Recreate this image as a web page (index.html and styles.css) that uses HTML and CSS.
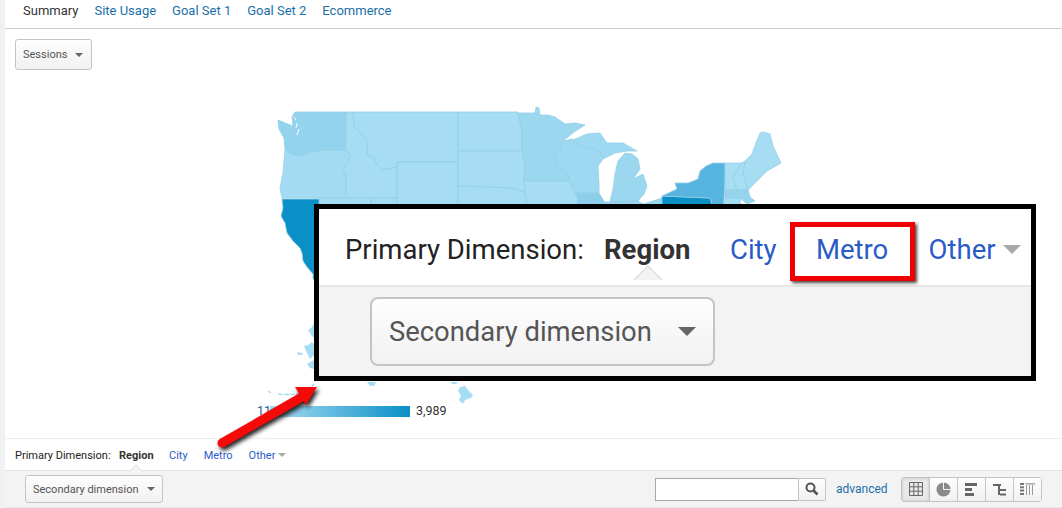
FILE: index.html
```html
<!DOCTYPE html>
<html lang="en">
<head>
    <meta charset="UTF-8" />
    <title>Location report</title>
    <link rel="stylesheet" href="styles.css">
</head>
<body>
<div class="page">
    <nav class="tabs">
        <a class="tab current">Summary</a>
        <a class="tab">Site Usage</a>
        <a class="tab">Goal Set 1</a>
        <a class="tab">Goal Set 2</a>
        <a class="tab">Ecommerce</a>
    </nav>

    <div class="metric-row">
        <button class="select-btn sessions">Sessions<span class="caret"></span></button>
    </div>

    <section class="map-area">
        <svg class="map" viewBox="5 70 1057 333" width="1057" height="333">
            <g class="states">
                <polygon fill="#94d3ee" points="278,119 285,122 293,125 292,116 295,111 346,111 346,149 323,149 310,152 298,155 291,153 285,148 284,137 279,128"/>
                <polygon fill="#a3dbf2" points="285,148 291,153 298,155 310,152 323,149 346,149 351,155 343,170 346,173 346,197 282,197 280,187 283,172 284,160"/>
                <polygon fill="#a6ddf3" points="346,111 353,111 354,125 361,133 368,140 367,154 373,156 378,165 382,169 397,166 397,197 346,197 346,173 343,170 351,155 346,149"/>
                <polygon fill="#a6ddf3" points="353,111 458,111 458,161 397,161 397,166 382,169 378,165 373,156 367,154 368,140 361,133 354,125"/>
                <polygon fill="#a6ddf3" points="397,161 458,161 458,215 397,215"/>
                <polygon fill="#a6ddf3" points="458,111 518,111 522,130 522,150 458,150"/>
                <polygon fill="#a6ddf3" points="458,150 522,150 525,163 524,180 525,192 518,189 510,187 458,185"/>
                <polygon fill="#a6ddf3" points="458,185 510,187 518,189 525,192 528,215 458,215"/>
                <polygon fill="#9cd7f0" points="518,112 535,112 536,106 539,107 540,114 548,114 555,116 565,123 575,122 585,124 574,131 563,140 560,142 561,148 556,153 557,163 569,175 569,180 524,180 525,163 522,150 522,130"/>
                <polygon fill="#9fd9f1" points="563,140 573,138 578,143 600,150 603,158 598,165 599,183 599,192 575,192 570,182 569,175 557,163 556,153 561,148 560,142"/>
                <polygon fill="#a6ddf3" points="524,180 569,180 575,192 578,198 575,215 528,215 525,192"/>
                <polygon fill="#8dcfeb" points="575,192 599,192 605,202 607,215 575,215 578,198"/>
                <polygon fill="#9fd9f1" points="573,139 587,133 600,132 604,138 607,142 623,142 630,146 637,150 627,150 615,152 603,158 600,150 578,143"/>
                <polygon fill="#9cd7f0" points="625,152 632,153 638,158 640,168 633,178 643,173 647,185 644,193 638,200 625,201 610,201 613,188 615,173 618,160"/>
                <polygon fill="#9cd7f0" points="605,201 625,201 625,215 607,215"/>
                <polygon fill="#9cd7f0" points="625,201 638,200 643,203 653,200 662,197 662,215 625,215"/>
                <polygon fill="#0a8fc7" points="662,195 710,197 712,203 712,215 662,215"/>
                <polygon fill="#56b4de" points="675,182 688,182 698,178 700,170 706,165 713,162 725,162 725,180 723,215 712,215 712,203 710,197 662,195 677,188"/>
                <polygon fill="#a8def3" points="725,162 742,162 733,177 737,189 725,189"/>
                <polygon fill="#a8def3" points="742,162 745,160 743,173 748,189 737,189 733,177"/>
                <polygon fill="#a6ddf3" points="745,160 752,153 756,142 760,132 763,131 770,133 773,145 781,162 774,166 767,170 757,180 748,189 743,173"/>
                <polygon fill="#96d4ee" points="725,189 748,189 750,196 755,200 747,203 740,197 725,197"/>
                <polygon fill="#a6ddf3" points="725,197 740,197 742,215 723,215"/>
                <polygon fill="#a6ddf3" points="319,197 371,197 371,215 319,215"/>
                <polygon fill="#a6ddf3" points="371,197 397,197 397,215 371,215"/>
                <polygon fill="#0a8fc7" points="282,198 319,198 319,280 313,278 313,273 307,266 303,260 302,252 300,247 293,240 287,232 285,222 281,215 283,207"/>
            </g>
            <path class="sound" d="M294 116l2 3M297 122l-1 5M299 128l-2 6"/>
            <g class="islands">
                <polygon points="308,329 312,326 315,320 322,330 318,335 315,338 311,334"/>
                <polygon points="304,345 308,344 312,341 318,350 314,354 310,358 307,352"/>
                <polygon points="307,363 312,360 316,358 320,368 314,368 310,367"/>
                <polygon points="297,351 302,352 303,354 298,354"/>
                <polygon points="458,390 460,386 465,385 468,389 473,394 471,397 465,399 463,403 459,399 461,395"/>
                <polygon points="367,381 376,381 374,385 370,385"/>
                <polygon points="451,381 458,381 456,383 452,383"/>
                <path class="chain" d="M268 390l3 2M278 393c10 1 26 2 36-10"/>
            </g>
        </svg>
        <div class="legend">
            <span class="legend-min">11</span>
            <span class="legend-bar"></span>
            <span class="legend-max">3,989</span>
        </div>
    </section>

    <div class="dimension-bar">
        <span class="dim-label">Primary Dimension:</span>
        <span class="dim-current">Region</span>
        <a class="dim-link">City</a>
        <a class="dim-link">Metro</a>
        <a class="dim-link">Other<span class="caret light"></span></a>
    </div>

    <div class="table-tools">
        <button class="select-btn secondary">Secondary dimension<span class="caret"></span></button>
        <div class="search">
            <input class="search-input" type="text" />
            <button class="search-btn">
                <svg width="14" height="14" viewBox="0 0 14 14"><circle cx="5.5" cy="5.5" r="4" fill="none" stroke="#555" stroke-width="2"/><path d="M8.5 8.5l4 4" stroke="#555" stroke-width="2.6"/></svg>
            </button>
        </div>
        <a class="advanced">advanced</a>
        <div class="views">
            <span class="view active">
                <svg width="14" height="14" viewBox="0 0 14 14"><path d="M.5.5h13v13H.5zM4.8.5v13M9.2.5v13M.5 4.8h13M.5 9.2h13" fill="none" stroke="#666"/></svg>
            </span>
            <span class="view">
                <svg width="15" height="15" viewBox="0 0 15 15"><circle cx="7.5" cy="7.5" r="7" fill="#8a8a8a"/><path d="M7.5 0v7.5H15" fill="none" stroke="#f3f3f3"/></svg>
            </span>
            <span class="view">
                <svg width="13" height="13" viewBox="0 0 13 13"><path d="M0 0h12v3H0zM0 5h7v3H0zM0 10h9v3H0z" fill="#666"/></svg>
            </span>
            <span class="view">
                <svg width="13" height="13" viewBox="0 0 13 13"><path d="M0 1h8v2H0zM5 3h2v9H5zM7 6h6v2H7zM7 10.500h6v2H7z" fill="#666"/></svg>
            </span>
            <span class="view">
                <svg width="15" height="12" viewBox="0 0 15 12"><path d="M0 0h4v2H0zM0 3.300h4v2H0zM0 6.600h4v2H0zM0 10h4v2H0z" fill="#777"/><path d="M6 0h9v1H6zM6.500 2v10M9.500 2v10M12.500 2v10" stroke="#999" fill="none"/></svg>
            </span>
        </div>
    </div>

    <!-- zoomed copy of the dimension bar -->
    <div class="callout">
        <div class="dimension-bar big">
            <span class="dim-label">Primary Dimension:</span>
            <span class="dim-current">Region</span>
            <a class="dim-link">City</a>
            <a class="dim-link boxed">Metro</a>
            <a class="dim-link">Other<span class="caret light"></span></a>
        </div>
        <div class="callout-lower">
            <button class="select-btn big-select">Secondary dimension<span class="caret"></span></button>
        </div>
    </div>

    <svg class="arrow" width="110" height="70" viewBox="0 0 110 70">
        <path d="M12 60L92 14" stroke="#f50a0a" stroke-width="9" stroke-linecap="round"/>
        <polygon points="85,4 107,4 96,22" fill="#f50a0a"/>
    </svg>
</div>
</body>
</html>
```

FILE: styles.css
```css
html, body {
    margin: 0;
    padding: 0;
    height: 100%;
    overflow: hidden;
    background-color: white;
}

body {
    font-family: Roboto, 'Liberation Sans', sans-serif;
    color: #333;
}

.page {
    position: relative;
    box-sizing: border-box;
    height: 508px;
    border-left: 5px solid #f1f1f1;
}

a {
    text-decoration: none;
}

/* tabs */
.tabs {
    display: flex;
    gap: 16px;
    height: 28px;
    padding-left: 18px;
    border-bottom: 1px solid #cfcfcf;
    font-size: 13px;
    line-height: 22px;
}

.tab {
    color: #1a6fa8;
}

.tab.current {
    color: #333;
}

/* buttons */
.select-btn {
    display: flex;
    align-items: center;
    box-sizing: border-box;
    padding: 0 7px;
    background: linear-gradient(#fefefe, #f1f1f1);
    border: 1px solid #c4c4c4;
    border-radius: 3px;
    font-family: inherit;
    font-size: 11px;
    color: #555;
}

.caret {
    display: inline-block;
    width: 0;
    height: 0;
    margin-left: 8px;
    border-left: 4px solid transparent;
    border-right: 4px solid transparent;
    border-top: 4px solid #666;
}

.caret.light {
    margin-left: 3px;
    border-top-color: #aaa;
}

.metric-row {
    padding: 10px 0 0 10px;
    height: 31px;
}

.sessions {
    width: 77px;
    height: 31px;
}

/* map */
.map-area {
    height: 367px;
    margin-top: 1px;
}

.map {
    display: block;
}

.states polygon {
    stroke: #93cfe6;
    stroke-width: 0.8;
}

.sound {
    fill: none;
    stroke: white;
    stroke-width: 1;
}

.islands polygon {
    fill: #a6ddf3;
}

.chain {
    fill: none;
    stroke: #a6ddf3;
    stroke-width: 1.500;
    stroke-dasharray: 5 1;
}

.legend {
    display: flex;
    align-items: center;
    height: 14px;
    padding-left: 252px;
    font-size: 12.500px;
}

.legend-min {
    width: 13px;
    margin-bottom: 2px;
    color: #1c5c86;
}

.legend-bar {
    width: 140px;
    height: 11px;
    background: linear-gradient(to right, #a6ddf3, #0a8fc7);
}

.legend-max {
    margin-bottom: 2px;
    margin-left: 6px;
}

/* primary dimension bar */
.dimension-bar {
    position: relative;
    display: flex;
    align-items: center;
    height: 30px;
    padding-top: 1px;
    padding-left: 10px;
    border-top: 1px solid #eee;
    border-bottom: 1px solid #e3e3e3;
    font-size: 11px;
}

.dim-label {
    width: 104px;
    color: #222;
}

.dim-current {
    position: relative;
    width: 50px;
    font-weight: bold;
}

.dim-current::after {
    content: "";
    position: absolute;
    left: 12px;
    bottom: -14px;
    width: 9px;
    height: 9px;
    background-color: #f3f3f3;
    border-top: 1px solid #e3e3e3;
    border-left: 1px solid #e3e3e3;
    transform: rotate(45deg);
    clip-path: polygon(0 0, 100% 0, 0 100%);
}

.dim-link {
    display: flex;
    align-items: center;
    margin-right: 16px;
    color: #2a5cc8;
}

/* bottom tool row */
.table-tools {
    display: flex;
    align-items: center;
    height: 36px;
    padding-left: 20px;
    background-color: #f3f3f3;
    border-bottom: 1px solid #e6e6e6;
}

.secondary {
    width: 138px;
    height: 28px;
}

.search {
    display: flex;
    margin-left: 492px;
}

.search-input {
    box-sizing: border-box;
    width: 143px;
    height: 23px;
    padding: 0;
    background-color: white;
    border: 1px solid #a8a8a8;
    border-right: none;
}

.search-btn {
    display: flex;
    align-items: center;
    justify-content: center;
    box-sizing: border-box;
    width: 28px;
    height: 23px;
    padding: 0;
    background: linear-gradient(#fefefe, #f1f1f1);
    border: 1px solid #c4c4c4;
    border-radius: 0 2px 2px 0;
}

.advanced {
    width: 65px;
    margin-left: 10px;
    font-size: 12px;
    color: #1a6fa8;
}

.views {
    display: flex;
    box-sizing: border-box;
    width: 141px;
    height: 25px;
    border: 1px solid #c4c4c4;
    border-radius: 3px;
}

.view {
    display: flex;
    flex: 1;
    align-items: center;
    justify-content: center;
    background: linear-gradient(#fefefe, #f1f1f1);
    border-left: 1px solid #c4c4c4;
}

.view:first-child {
    border-left: none;
}

.view.active {
    background: #e9e9e9;
    box-shadow: inset 0 0 3px #bbb;
}

/* annotation */
.callout {
    position: absolute;
    left: 309px;
    top: 204px;
    box-sizing: border-box;
    width: 722px;
    height: 177px;
    background-color: #f3f3f3;
    border: 5px solid black;
}

.dimension-bar.big {
    height: 71px;
    padding-top: 5px;
    padding-left: 26px;
    background-color: white;
    border-top: none;
    border-bottom: 2px solid #e6e6e6;
    font-size: 27.500px;
}

.big .dim-label {
    width: 259px;
}

.big .dim-current {
    width: 126px;
}

.big .dim-current::after {
    left: 33px;
    bottom: -25px;
    width: 20px;
    height: 20px;
    border-top-width: 2px;
    border-left-width: 2px;
}

.big .dim-link {
    margin-right: 0;
}

.big .boxed {
    box-sizing: border-box;
    justify-content: center;
    width: 125px;
    height: 59px;
    margin: 4px 14px 0 13px;
    padding-bottom: 4px;
    border: 5px solid #f00000;
    box-shadow: 2px 2px 3px #444;
}

.big .caret.light {
    margin-left: 7px;
    border-left-width: 9px;
    border-right-width: 9px;
    border-top-width: 9px;
}

.callout-lower {
    padding: 10px 0 0 51px;
}

.big-select {
    width: 345px;
    height: 69px;
    padding: 0 17px;
    border-width: 2px;
    border-radius: 8px;
    font-size: 27.400px;
}

.big-select .caret {
    margin-left: 26px;
    border-left-width: 9px;
    border-right-width: 9px;
    border-top-width: 9px;
}

.arrow {
    position: absolute;
    left: 205px;
    top: 383px;
    overflow: visible;
    filter: drop-shadow(2px 3px 2px #222);
}
```
